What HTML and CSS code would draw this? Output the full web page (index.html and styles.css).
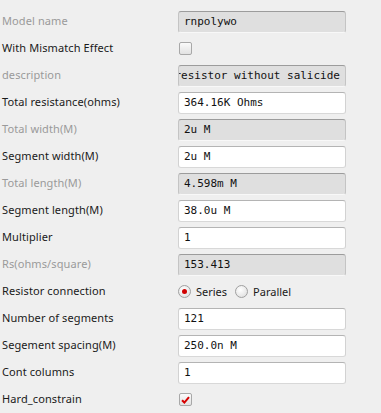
FILE: index.html
```html
<!DOCTYPE html>
<html lang="en">
<head>
    <meta charset="utf-8">
    <meta name="viewport" content="width=device-width, initial-scale=1">
    <title>Resistor parameters</title>
    <link rel="stylesheet" href="styles.css">
</head>
<body>
    <div id="form">
        <label class="lbl off">Model name</label>
        <div class="field ro">rnpolywo</div>

        <label class="lbl">With Mismatch Effect</label>
        <div class="cell"><span class="check"></span></div>

        <label class="lbl off">description</label>
        <div class="field ro tail"><span>resistor without salicide</span></div>

        <label class="lbl">Total resistance(ohms)</label>
        <div class="field">364.16K Ohms</div>

        <label class="lbl off">Total width(M)</label>
        <div class="field ro">2u M</div>

        <label class="lbl">Segment width(M)</label>
        <div class="field">2u M</div>

        <label class="lbl off">Total length(M)</label>
        <div class="field ro">4.598m M</div>

        <label class="lbl">Segment length(M)</label>
        <div class="field">38.0u M</div>

        <label class="lbl">Multiplier</label>
        <div class="field">1</div>

        <label class="lbl off">Rs(ohms/square)</label>
        <div class="field ro">153.413</div>

        <label class="lbl">Resistor connection</label>
        <div class="cell radios">
            <span class="radio on"></span><span class="opt">Series</span>
            <span class="radio"></span><span class="opt">Parallel</span>
        </div>

        <label class="lbl">Number of segments</label>
        <div class="field">121</div>

        <label class="lbl">Segement spacing(M)</label>
        <div class="field">250.0n M</div>

        <label class="lbl">Cont columns</label>
        <div class="field">1</div>

        <label class="lbl">Hard_constrain</label>
        <div class="cell">
            <span class="check">
                <svg width="12" height="12" viewBox="0 0 12 12"><path d="M2.2 6.2 L4.8 8.8 L9.8 2.8" fill="none" stroke="#d60000" stroke-width="2.2"/></svg>
            </span>
        </div>
    </div>
</body>
</html>
```
FILE: styles.css
```css
body {
    margin: 0;
    background: #efefef;
    font-family: 'Noto Sans', sans-serif;
    font-size: 11px;
}

#form {
    display: grid;
    grid-template-columns: 178px 168px;
    grid-auto-rows: 27px;
    padding-top: 8px;
    align-items: center;
}

.lbl {
    padding-left: 2px;
    margin-top: -2px;
    color: #1a1a1a;
    letter-spacing: 0.1px;
}

.lbl.off {
    color: #9a9a9a;
}

.field {
    box-sizing: border-box;
    height: 22px;
    line-height: 20px;
    padding: 0 5px;
    background: #fff;
    border: 1px solid;
    border-color: #b4b4b4 #d2d2d2 #d8d8d8 #d2d2d2;
    border-radius: 3px;
    font-family: 'DejaVu Sans Mono', monospace;
    font-size: 11px;
    color: #111;
    white-space: nowrap;
    overflow: hidden;
}

.field.ro {
    background: #dfdfdf;
    border-color: #9c9c9c #c4c4c4 #f8f8f8 #c4c4c4;
}

.field.tail {
    display: flex;
    justify-content: flex-end;
}

.cell {
    display: flex;
    align-items: center;
    height: 22px;
}

.check {
    box-sizing: border-box;
    width: 13px;
    height: 13px;
    margin-left: 1px;
    border: 1px solid #a8a8a8;
    border-radius: 2px;
    background: linear-gradient(#fafafa, #e2e2e2);
    display: flex;
    align-items: center;
    justify-content: center;
}

.radio {
    box-sizing: border-box;
    width: 13px;
    height: 13px;
    border: 1px solid #a0a0a0;
    border-radius: 50%;
    background: radial-gradient(circle at 40% 35%, #ffffff, #dadada);
    position: relative;
}

.radio.on::after {
    content: "";
    position: absolute;
    left: 3px;
    top: 3px;
    width: 5px;
    height: 5px;
    border-radius: 50%;
    background: #d00000;
}

.opt {
    margin-left: 5px;
    margin-right: 8px;
    color: #1a1a1a;
}
```
